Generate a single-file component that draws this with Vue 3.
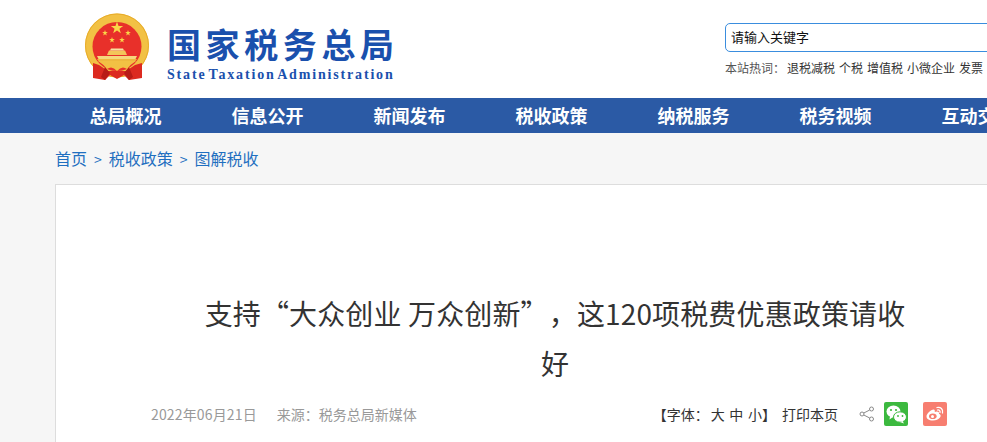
<template>
  <div class="page">
    <header class="header">
      <div class="logo">
        <svg class="emblem" width="66" height="70" viewBox="0 0 66 70">
          <circle cx="33" cy="32.500" r="32" fill="#f2c144" />
          <circle cx="33" cy="32.500" r="31.500" fill="none" stroke="#e8ac2a" stroke-width="1" />
          <circle cx="33" cy="33.500" r="24.500" fill="#e8302a" />
          <path d="M23 42 L25 37.500 H41 L43 42 Z" fill="#f3c65a" />
          <path d="M26 37.500 L27 35.500 H39 L40 37.500 Z" fill="#f7e0a0" />
          <path d="M13 43 H53 L50 49 H16 Z" fill="#f6d77c" />
          <path d="M13 46 H53 L51.500 48 H14.500 Z" fill="#eeb93f" />
          <path d="M15 52 L9 50 L9 65 L21 67 L26 62 L33 66 L40 62 L45 67 L58 65 L58 50 L51 52 L42 58 L24 58 Z" fill="#dc2a20" />
          <path d="M21 54 L17 64 L21 67 L26 60 Z M45 54 L49 64 L45 67 L40 60 Z" fill="#b81c16" />
          <path d="M14 48 H52 Q47 51 43 56 Q38 52 33 58 Q28 52 23 56 Q19 51 14 48 Z" fill="#f2c144" />
          <polygon v-for="s in stars" :key="s.x" :points="starPoints(s)" fill="#f9d648" />
        </svg>
        <div class="logo-text">
          <div class="logo-cn">国家税务总局</div>
          <div class="logo-en">State Taxation Administration</div>
        </div>
      </div>
      <div class="search">
        <input class="search-input" type="text" placeholder="请输入关键字" />
        <div class="hot">
          <span class="hot-label">本站热词：</span>
          <a v-for="w in hotWords" :key="w" class="hot-word">{{ w }}</a>
        </div>
      </div>
    </header>

    <nav class="nav">
      <a v-for="item in navItems" :key="item" class="nav-item">{{ item }}</a>
    </nav>

    <main class="main">
      <div class="crumbs">
        <a>首页</a><span class="sep">&gt;</span><a>税收政策</a><span class="sep">&gt;</span><a>图解税收</a>
      </div>
      <article class="card">
        <h1 class="title">支持“大众创业 万众创新”，这120项税费优惠政策请收好</h1>
        <div class="meta">
          <div class="meta-left">
            <span class="date">2022年06月21日</span>
            <span>来源：税务总局新媒体</span>
          </div>
          <div class="meta-right">
            <span class="font-size">【字体：<span class="sizes">大 中 小</span>】</span>
            <span class="print">打印本页</span>
            <svg class="share" width="16" height="16" viewBox="0 0 16 16" fill="none" stroke="#8a8a8a" stroke-width="1">
              <circle cx="12.500" cy="3" r="2" />
              <circle cx="3" cy="8" r="2" />
              <circle cx="12.500" cy="13" r="2" />
              <path d="M4.800 7 L10.700 4 M4.800 9 L10.700 12" />
            </svg>
            <span class="social wechat">
              <svg width="24" height="24" viewBox="0 0 24 24">
                <ellipse cx="9.500" cy="9.500" rx="7" ry="6" fill="#fff" />
                <path d="M6 14 L5.500 17.500 L9 15 Z" fill="#fff" />
                <ellipse cx="16" cy="15" rx="6.500" ry="5.200" fill="#fff" stroke="#3cb93f" stroke-width="1" />
                <path d="M18.500 19 L20 21.500 L16 20 Z" fill="#fff" />
                <circle cx="7" cy="8" r="1.100" fill="#3cb93f" />
                <circle cx="12" cy="8" r="1.100" fill="#3cb93f" />
                <circle cx="14" cy="14" r="0.900" fill="#3cb93f" />
                <circle cx="18.500" cy="14" r="0.900" fill="#3cb93f" />
              </svg>
            </span>
            <span class="social weibo">
              <svg width="24" height="24" viewBox="0 0 24 24">
                <path d="M10 18.500 C5.500 18.500 3.500 16.500 3.500 14.500 C3.500 11.500 8 7.500 10.500 7.500 C12 7.500 12 9 11.700 10 C14 9 16.500 9.500 16 11.700 C18 12.300 18 14 17 15.500 C15.500 17.500 13 18.500 10 18.500 Z" fill="#fff" />
                <ellipse cx="9.800" cy="14.300" rx="3.800" ry="2.800" fill="#f77e70" />
                <circle cx="9.500" cy="14.500" r="1.500" fill="#fff" />
                <path d="M14 5.500 C17.500 4.500 20.500 7.500 19.500 11 M14.500 8 C16 7.500 17.500 9 17 10.500" fill="none" stroke="#fff" stroke-width="1.300" stroke-linecap="round" />
              </svg>
            </span>
          </div>
        </div>
      </article>
    </main>
  </div>
</template>

<script setup>
const navItems = ['总局概况', '信息公开', '新闻发布', '税收政策', '纳税服务', '税务视频', '互动交流']
const hotWords = ['退税减税', '个税', '增值税', '小微企业', '发票']
const stars = [
  { x: 33, y: 15, r: 6.5 },
  { x: 21, y: 20, r: 3 },
  { x: 44, y: 20, r: 3 },
  { x: 28, y: 27, r: 3 },
  { x: 38, y: 27, r: 3 },
]

function starPoints({ x, y, r }) {
  const pts = []
  for (let i = 0; i < 10; i++) {
    const radius = i % 2 === 0 ? r : r * 0.4
    const a = (Math.PI / 5) * i - Math.PI / 2
    pts.push(`${(x + radius * Math.cos(a)).toFixed(2)},${(y + radius * Math.sin(a)).toFixed(2)}`)
  }
  return pts.join(' ')
}
</script>

<style>
html,
body {
  margin: 0;
  overflow: hidden;
  background: #f6f6f6;
}
</style>

<style scoped>
.page {
  width: 987px;
  height: 442px;
  overflow: hidden;
  font-family: "Noto Sans CJK SC", "Liberation Sans", sans-serif;
  background: #f6f6f6;
  text-spacing-trim: space-all;
}

.header {
  height: 98px;
  background: #fff;
  display: flex;
  justify-content: space-between;
  box-sizing: border-box;
  padding-left: 84px;
}

.logo {
  display: flex;
  padding-top: 13px;
  gap: 17px;
}

.emblem {
  flex-shrink: 0;
}

.logo-text {
  padding-top: 11px;
}

.logo-cn {
  font-size: 34px;
  line-height: 40px;
  font-weight: 700;
  letter-spacing: 4.600px;
  color: #1a50ad;
  white-space: nowrap;
}

.logo-en {
  font-family: "Liberation Serif", serif;
  font-size: 14px;
  line-height: 16px;
  font-weight: 700;
  letter-spacing: 1.830px;
  word-spacing: -3px;
  color: #1a50ad;
  white-space: nowrap;
  margin-top: 3px;
}

.search {
  width: 262px;
  padding-top: 23px;
}

.search-input {
  display: block;
  width: 300px;
  height: 29px;
  box-sizing: border-box;
  border: 1px solid #3a8dde;
  border-radius: 5px;
  padding: 0 5px 2px;
  outline: none;
  font: 13px "Noto Sans CJK SC", sans-serif;
}

.search-input::placeholder {
  color: #111;
  opacity: 1;
}

.hot {
  display: flex;
  margin-top: 8px;
  font-size: 12px;
  line-height: 16px;
  color: #333;
  white-space: nowrap;
  gap: 4px;
}

.hot-label {
  color: #555;
  margin-right: -2px;
}

.nav {
  height: 35px;
  background: #2b5aa5;
  display: flex;
  padding-left: 89.500px;
  gap: 70px;
  white-space: nowrap;
}

.nav-item {
  width: 72px;
  flex-shrink: 0;
  font-size: 18px;
  font-weight: 700;
  line-height: 34px;
  color: #fff;
}

.main {
  padding-left: 55px;
}

.crumbs {
  height: 51px;
  line-height: 51px;
  font-size: 16px;
  color: #1f6fc0;
}

.sep {
  font-size: 14px;
  margin: 0 7px;
}

.card {
  width: 1000px;
  height: 300px;
  box-sizing: border-box;
  background: #fff;
  border: 1px solid #ddd;
  padding: 103px 107px 0 95px;
}

.title {
  margin: 0 0 0 53px;
  width: 702px;
  font-size: 28px;
  line-height: 50px;
  font-weight: 400;
  letter-spacing: 0.140px;
  color: #333;
  text-align: center;
}

.meta {
  display: flex;
  justify-content: space-between;
  align-items: center;
  margin-top: 14px;
  font-size: 14px;
  color: #999;
}

.meta-left {
  display: flex;
  gap: 20px;
}

.date {
  letter-spacing: 0.150px;
}

.meta-right {
  display: flex;
  align-items: center;
  color: #333;
  white-space: nowrap;
}

.sizes {
  margin-left: 2px;
  word-spacing: 1.500px;
}

.print {
  margin-left: 6px;
}

.share {
  margin-left: 21px;
}

.social {
  width: 24px;
  height: 24px;
  border-radius: 2px;
  display: block;
}

.wechat {
  background: #3cb93f;
  margin-left: 9px;
}

.weibo {
  background: #f77e70;
  margin-left: 15px;
}
</style>
